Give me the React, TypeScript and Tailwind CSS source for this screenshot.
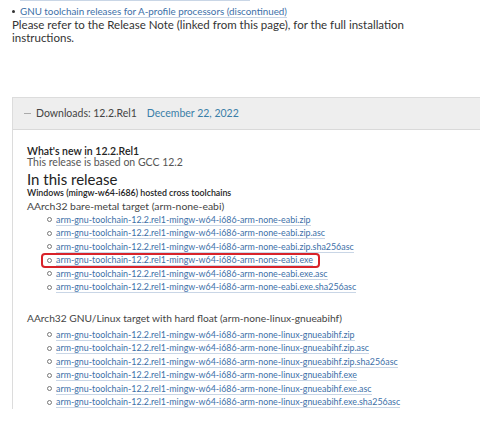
const eabi = [
  'arm-gnu-toolchain-12.2.rel1-mingw-w64-i686-arm-none-eabi.zip',
  'arm-gnu-toolchain-12.2.rel1-mingw-w64-i686-arm-none-eabi.zip.asc',
  'arm-gnu-toolchain-12.2.rel1-mingw-w64-i686-arm-none-eabi.zip.sha256asc',
  'arm-gnu-toolchain-12.2.rel1-mingw-w64-i686-arm-none-eabi.exe',
  'arm-gnu-toolchain-12.2.rel1-mingw-w64-i686-arm-none-eabi.exe.asc',
  'arm-gnu-toolchain-12.2.rel1-mingw-w64-i686-arm-none-eabi.exe.sha256asc',
]

const gnueabihf = [
  'arm-gnu-toolchain-12.2.rel1-mingw-w64-i686-arm-none-linux-gnueabihf.zip',
  'arm-gnu-toolchain-12.2.rel1-mingw-w64-i686-arm-none-linux-gnueabihf.zip.asc',
  'arm-gnu-toolchain-12.2.rel1-mingw-w64-i686-arm-none-linux-gnueabihf.zip.sha256asc',
  'arm-gnu-toolchain-12.2.rel1-mingw-w64-i686-arm-none-linux-gnueabihf.exe',
  'arm-gnu-toolchain-12.2.rel1-mingw-w64-i686-arm-none-linux-gnueabihf.exe.asc',
  'arm-gnu-toolchain-12.2.rel1-mingw-w64-i686-arm-none-linux-gnueabihf.exe.sha256asc',
]

function FileList({ files, marked }: { files: string[]; marked?: number }) {
  return (
    <ul className="pl-[20px] text-[8.9px]">
      {files.map((f, i) => (
        <li key={f} className="flex h-[13.5px] items-center">
          <span className="relative inline-flex items-center gap-[4px]">
            {i === marked && (
              <span className="pointer-events-none absolute -bottom-[1.5px] -left-[6px] -right-[7px] -top-[1.5px] rounded-[4px] border-2 border-[#d8232a]" />
            )}
            <span className="inline-block h-[5px] w-[5px] rounded-full border border-[#777]" />
            <a className="border-b border-[#c9d6e6] leading-[11px] text-[#3d70a8]">{f}</a>
          </span>
        </li>
      ))}
    </ul>
  )
}

export default function App() {
  return (
    <div className="relative h-[423px] w-[480px] overflow-hidden bg-white pt-[5px] font-['Lato','Open_Sans',sans-serif] text-[11.5px] leading-[13px] text-[#333]">
      <div className="absolute left-[20px] top-0 h-[1px] w-[230px] bg-[#c9d6e6]" />
      <div className="ml-[12px] flex h-[13px] items-center gap-[5px]">
        <span className="inline-block h-[3px] w-[3px] rounded-full bg-[#333]" />
        <a className="border-b border-[#c9d6e6] text-[9.8px] leading-[11px] text-[#3d70a8]">
          GNU toolchain releases for A-profile processors (discontinued)
        </a>
      </div>
      <p className="ml-[12px] w-[450px]">
        Please refer to the Release Note (linked from this page), for the full installation instructions.
      </p>

      <div className="ml-[12px] mt-[53px] border-l border-t border-[#dcdcdc]">
        <div className="flex h-[32px] items-center border-b border-[#d9d9d9] bg-[#eeeeee] pl-[11px]">
          <span className="mr-[5px] inline-block h-[1px] w-[7px] bg-[#aaa]" />
          <span className="text-[10.5px] text-[#444]">Downloads: 12.2.Rel1</span>
          <span className="ml-[10px] text-[10.5px] text-[#3a7ea8]">December 22, 2022</span>
        </div>
        <div className="pl-[14px] pt-[15px]">
          <div className="text-[10.5px] font-semibold leading-[12px] text-[#222]">What's new in 12.2.Rel1</div>
          <div className="text-[10.5px] leading-[11px] text-[#555]">This release is based on GCC 12.2</div>
          <div className="mt-[3px] text-[15px] leading-[16px] text-[#222]">In this release</div>
          <div className="text-[8.8px] font-semibold leading-[12px] text-[#222]">Windows (mingw-w64-i686) hosted cross toolchains</div>
          <div className="text-[10.4px] leading-[14px] text-[#444]">AArch32 bare-metal target (arm-none-eabi)</div>
          <FileList files={eabi} marked={3} />
          <div className="mt-[17px] text-[10.2px] leading-[14px] text-[#444]">
            AArch32 GNU/Linux target with hard float (arm-none-linux-gnueabihf)
          </div>
          <div className="mt-[3px]">
            <FileList files={gnueabihf} />
          </div>
        </div>
      </div>
    </div>
  )
}
